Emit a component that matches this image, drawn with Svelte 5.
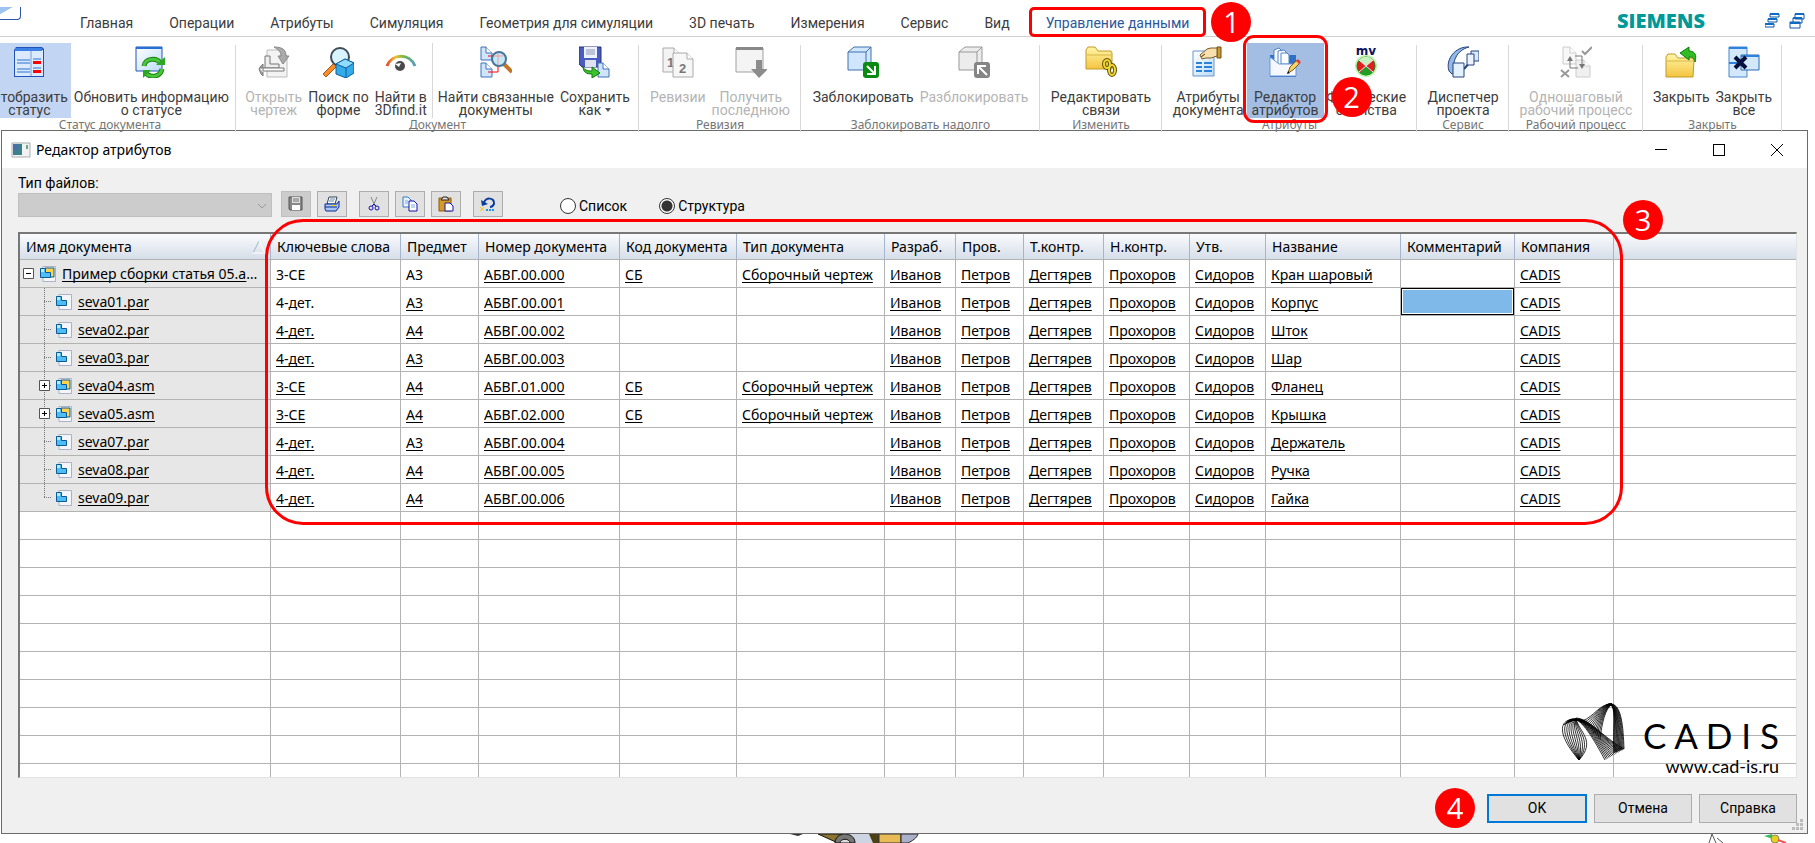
<script>
	const tabs = [
		'Главная',
		'Операции',
		'Атрибуты',
		'Симуляция',
		'Геометрия для симуляции',
		'3D печать',
		'Измерения',
		'Сервис',
		'Вид',
		'Управление данными'
	];
	let activeTab = $state('Управление данными');

	const groups = [
		{
			title: 'Статус документа',
			items: [
				{ icon: 'status', lines: ['Отобразить', 'статус'], on: true },
				{ icon: 'refresh', lines: ['Обновить информацию', 'о статусе'] }
			]
		},
		{
			title: 'Документ',
			items: [
				{ icon: 'draft', lines: ['Открыть', 'чертеж'], off: true },
				{ icon: 'shape', lines: ['Поиск по', 'форме'] },
				{ icon: 'eye', lines: ['Найти в', '3Dfind.it'] },
				{ icon: 'related', lines: ['Найти связанные', 'документы'], split: true },
				{ icon: 'saveas', lines: ['Сохранить', 'как'], menu: true }
			]
		},
		{
			title: 'Ревизия',
			items: [
				{ icon: 'revisions', lines: ['Ревизии'], off: true },
				{ icon: 'latest', lines: ['Получить', 'последнюю'], off: true }
			]
		},
		{
			title: 'Заблокировать надолго',
			items: [
				{ icon: 'lock', lines: ['Заблокировать'] },
				{ icon: 'unlock', lines: ['Разблокировать'], off: true }
			]
		},
		{ title: 'Изменить', items: [{ icon: 'links', lines: ['Редактировать', 'связи'] }] },
		{
			title: 'Атрибуты',
			items: [
				{ icon: 'props', lines: ['Атрибуты', 'документа'] },
				{ icon: 'editor', lines: ['Редактор', 'атрибутов'], mark: true },
				{ icon: 'physical', lines: ['Физические', 'свойства'] }
			]
		},
		{ title: 'Сервис', items: [{ icon: 'manager', lines: ['Диспетчер', 'проекта'] }] },
		{ title: 'Рабочий процесс', items: [{ icon: 'workflow', lines: ['Одношаговый', 'рабочий процесс'], off: true }] },
		{
			title: 'Закрыть',
			items: [
				{ icon: 'close', lines: ['Закрыть'] },
				{ icon: 'closeall', lines: ['Закрыть', 'все'] }
			]
		}
	];

	const columns = [
		{ name: 'Имя документа', width: 251 },
		{ name: 'Ключевые слова', width: 130 },
		{ name: 'Предмет', width: 78 },
		{ name: 'Номер документа', width: 141 },
		{ name: 'Код документа', width: 117 },
		{ name: 'Тип документа', width: 148 },
		{ name: 'Разраб.', width: 71 },
		{ name: 'Пров.', width: 68 },
		{ name: 'Т.контр.', width: 80 },
		{ name: 'Н.контр.', width: 86 },
		{ name: 'Утв.', width: 76 },
		{ name: 'Название', width: 135 },
		{ name: 'Комментарий', width: 114 },
		{ name: 'Компания', width: 99 }
	];

	const people = ['Иванов', 'Петров', 'Дегтярев', 'Прохоров', 'Сидоров'];
	const drawing = 'Сборочный чертеж';
	const rows = [
		['Пример сборки статья 05.asm', '3-СЕ', 'А3', 'АБВГ.00.000', 'СБ', drawing, 'Кран шаровый'],
		['seva01.par', '4-дет.', 'А3', 'АБВГ.00.001', '', '', 'Корпус'],
		['seva02.par', '4-дет.', 'А4', 'АБВГ.00.002', '', '', 'Шток'],
		['seva03.par', '4-дет.', 'А3', 'АБВГ.00.003', '', '', 'Шар'],
		['seva04.asm', '3-СЕ', 'А4', 'АБВГ.01.000', 'СБ', drawing, 'Фланец'],
		['seva05.asm', '3-СЕ', 'А4', 'АБВГ.02.000', 'СБ', drawing, 'Крышка'],
		['seva07.par', '4-дет.', 'А3', 'АБВГ.00.004', '', '', 'Держатель'],
		['seva08.par', '4-дет.', 'А4', 'АБВГ.00.005', '', '', 'Ручка'],
		['seva09.par', '4-дет.', 'А4', 'АБВГ.00.006', '', '', 'Гайка']
	].map((r) => ({ file: r[0], cells: [...r.slice(1, 6), ...people, r[6], '', 'CADIS'] }));
	const emptyRows = Array(10).fill(0);

	let view = $state('tree');
	let selected = $state('1-11');

	// values that are locked by the system are drawn without the underline
	const plain = ['0-0', '0-1', '1-0'];

	// the logo is a set of ribbons, each one a bundle of curves between two edges
	function bundle(a, b, n) {
		const out = [];
		for (let i = 0; i <= n; i++) {
			const p = a.map((v, k) => (v + ((b[k] - v) * i) / n).toFixed(1));
			out.push(`M${p[0]} ${p[1]}C${p.slice(2).join(' ')}`);
		}
		return out.join('');
	}
	const logo = [
		bundle([14, 16, -6, 16, -3, 34, 17, 57], [14, 16, 18, 30, 34, 38, 17, 57], 10),
		bundle([2, 22, 12, 8, 22, 18, 43, 57], [14, 15, 28, 16, 38, 32, 62, 46], 14),
		bundle([20, 18, 32, 14, 38, 0, 50, 1], [38, 36, 40, 20, 43, 6, 50, 1], 11),
		bundle([44, 2, 58, -4, 61, 16, 62, 46], [48, 1, 55, 4, 50, 28, 52, 50], 12)
	].join('');
</script>

{#snippet page(x, y, w, h, fill, stroke)}
	<path d="M{x} {y}h{w - 6}l6 6v{h - 6}h-{w}z" {fill} {stroke} />
	<path d="M{x + w - 6} {y}v6h6" fill="#fff" {stroke} />
{/snippet}

{#snippet icon(name)}
	<svg class="pic" viewBox="0 0 32 32" aria-hidden="true">
		<defs>
			<linearGradient id="blue" x1="0" y1="0" x2="1" y2="1"><stop offset="0" stop-color="#fff" /><stop offset="1" stop-color="#bcdcf8" /></linearGradient>
			<linearGradient id="gold" x1="0" y1="0" x2="0" y2="1"><stop offset="0" stop-color="#fff6a8" /><stop offset="1" stop-color="#f4c440" /></linearGradient>
			<linearGradient id="rainbow"><stop offset="0" stop-color="#e8482c" /><stop offset=".3" stop-color="#f4c02c" /><stop offset=".6" stop-color="#74b94a" /><stop offset="1" stop-color="#559cc4" /></linearGradient>
		</defs>
		{#if name === 'status'}
			<path d="M1 4l2-3h26l2 2v28H1z" fill="#2253b8" />
			<path d="M2 4h28v26H2z" fill="#dceaff" />
			<path d="M2 2h27v3H2z" fill="#3c82e6" />
			<path d="M18 5v25" stroke="#7d9cd4" />
			<path d="M4 14h13M4 17h13M4 23h13M4 26h13M20 13h8M20 22h8" stroke="#2772ce" />
			<path d="M20 15h8v3h-8zM20 24h8v3h-8z" fill="#f00" />
		{:else if name === 'refresh'}
			<path d="M1 1h26v24H1z" fill="url(#blue)" stroke="#2255b5" />
			<path d="M1 1h26v2H1z" fill="#2471d5" />
			<path d="M9 20c1-8 13-9 17-2M27 23c-2 9-13 9-17 3" fill="none" stroke="#17820e" stroke-width="5" />
			<path d="M9 20c1-8 13-9 17-2M27 23c-2 9-13 9-17 3" fill="none" stroke="#49c63c" stroke-width="3" />
			<path d="M21 19h9v-8zM16 24H8v8z" fill="#2ba722" />
		{:else if name === 'draft'}
			{@render page(9, 4, 20, 27, '#f3f3f3', '#bbb')}
			<path d="M7 10h5v8h9v4H7z" fill="#eee" stroke="#777" />
			<path d="M1 22h4v-4l-2 2-2 3 2 5 2 2v-4" fill="#aaa" stroke="#777" /><path d="M5 22h21v3H5z" fill="#fff" stroke="#777" />
			<path d="M16 1c10 0 12 4 12 9h3l-6 8-5-8h3c0-4-2-6-7-9z" fill="#aaa" stroke="#888" />
		{:else if name === 'shape'}
			<path d="M1 28L12 17l3 3L4 31z" fill="#f58d2b" stroke="#a85a18" />
			<circle cx="18" cy="11" r="9" fill="#d8f3ff" stroke="#3f4c55" stroke-width="2" />
			<path d="M14 18l9-5 9 4v10l-8 5-10-4z" fill="#35aae8" stroke="#0b5f9f" />
			<path d="M14 18l9-5 9 4-8 5z" fill="#8fdcff" stroke="#0b5f9f" /><path d="M24 22v10" stroke="#0b5f9f" />
		{:else if name === 'eye'}
			<path d="M2 20C7 7 25 7 30 20" fill="none" stroke="url(#rainbow)" stroke-width="3" />
			<circle cx="15" cy="20" r="5" fill="#4a4a4a" /><path d="M10 18l6-1-2 4z" fill="#fff" />
		{:else if name === 'related'}
			{@render page(1, 1, 11, 13, '#cfe5fb', '#3f72b8')}
			{@render page(1, 17, 11, 14, '#cfe5fb', '#3f72b8')}
			<path d="M8 10h4M8 26h10v-8" fill="none" stroke="#f00" />
			<path d="M24 18l8 8" stroke="#c37428" stroke-width="4" />
			<circle cx="19" cy="13" r="7" fill="#c3e8f8" stroke="#48759a" stroke-width="2" /><path d="M18 7v12M14 10h9" stroke="#f29a9a" />
		{:else if name === 'saveas'}
			<path d="M0 1h22v20H3l-3-3z" fill="#4a5cc0" stroke="#29327e" />
			<path d="M5 1h13v11H5z" fill="#eef2ff" /><path d="M7 4h9M7 6h9M7 8h9" stroke="#8a96b6" /><path d="M6 14h11v7H6z" fill="#dfe3ee" />
			{@render page(19, 17, 11, 14, '#cfe5fb', '#3f72b8')}
			<path d="M4 20c1 4 4 5 9 5v-4l8 6-8 5v-4c-6 0-9-2-9-8z" fill="#3bc32b" stroke="#117a0d" />
		{:else if name === 'revisions'}
			{@render page(1, 2, 17, 24, '#f3f3f3', '#aaa')}
			<text x="5" y="21" class="num">1</text>
			{@render page(11, 7, 20, 24, '#f7f7f7', '#aaa')}
			<text x="17" y="27" class="num">2</text>
		{:else if name === 'latest'}
			<path d="M1 2h27v24H1z" fill="#f4f4f4" stroke="#a0a0a0" /><path d="M1 1h27v3H1z" fill="#888" />
			<path d="M21 14h6v9h6l-9 9-8-9h5z" fill="#8c8c8c" />
		{:else if name === 'lock' || name === 'unlock'}
			{@const gray = name === 'unlock'}
			<path d="M1 6l6-5h17v18l-5 5H1z" fill={gray ? '#ececec' : '#cfe6fc'} stroke={gray ? '#999' : '#4171a8'} />
			<path d="M1 6h18v18M19 6l5-5" fill="none" stroke={gray ? '#999' : '#4171a8'} />
			<rect x="16" y="16" width="16" height="16" rx="3" fill={gray ? '#858585' : '#0a8a12'} />
			{#if gray}
				<path d="M29 29L20 20M20 28v-8h8" fill="none" stroke="#fff" stroke-width="2" />
			{:else}
				<path d="M20 20l8 8M28 20v8h-8" fill="none" stroke="#fff" stroke-width="2" />
			{/if}
		{:else if name === 'links'}
			<path d="M1 4l2-3h7l3 4h13l1 2v16H1z" fill="url(#gold)" stroke="#c39a26" />
			<path d="M2 9h24" stroke="#d8b544" />
			<g fill="none" stroke="#66560a" stroke-width="4"><ellipse cx="22" cy="18" rx="3" ry="4" /><ellipse cx="27" cy="24" rx="3" ry="5" /></g>
			<g fill="none" stroke="#f0d830" stroke-width="2"><ellipse cx="22" cy="18" rx="3" ry="4" /><ellipse cx="27" cy="24" rx="3" ry="5" /></g>
		{:else if name === 'close'}
			<path d="M1 11l2-3h7l3 4h14l2 2-1 17H1z" fill="url(#gold)" stroke="#c39a26" />
			<path d="M2 15h26" stroke="#d8b544" />
			<path d="M15 7l9-6v4c6 0 8 4 6 11-1-4-2-5-6-5v3z" fill="#32bc23" stroke="#117a0d" />
		{:else if name === 'props'}
			<path d="M1 5h21v25H1z" fill="url(#blue)" stroke="#6795cc" />
			<path d="M4 17h6M12 17h8M4 21h6M12 21h8M4 25h6M12 25h8" stroke="#2a83d8" stroke-width="2" />
			<path d="M25 1h4v11h-4z" fill="#c89a3a" stroke="#6e4f14" />
			<path d="M8 9l7-6 4-1h6v8l-6 2H14l-4 1-1-2 4-3-4 3z" fill="#f7dfae" stroke="#7a5a26" />
		{:else if name === 'editor'}
			<path d="M1 9h26v22H1z" fill="#2f6fc4" />
			<path d="M5 4l5-2 2 2v15H5z" fill="#fff" stroke="#4b82c8" /><path d="M9 5l6-1 2 2v13H9z" fill="#fff" stroke="#4b82c8" /><path d="M12 7h6l2 2v9h-8z" fill="#fff" stroke="#4b82c8" />
			<path d="M1 11l9 7h17v12H1z" fill="#f5f9ff" stroke="#6a97d5" />
			<path d="M19 27l2-6 7-7 3 3-7 7z" fill="#f6d169" stroke="#7b5b1c" /><path d="M27 15l2-2 3 3-2 2z" fill="#e04040" /><path d="M18 28l1-3 2 2z" fill="#111" />
		{:else if name === 'physical'}
			<text x="16" y="9" class="mv">mv</text>
			<circle cx="16" cy="20" r="11" fill="#b8f5a4" /><circle cx="16" cy="20" r="9" fill="#e01f1f" stroke="#2f6f22" />
			<path d="M16 20l-7-6a9 9 0 0 1 14 0z" fill="#c9f0c0" /><path d="M16 20l-6 7a9 9 0 0 0 12 0z" fill="#1f9d26" /><path d="M9 14l14 12M23 14L9 26" stroke="#eee" />
		{:else if name === 'manager'}
			<path d="M22 1C9 0-2 13 2 25l3 3 3-1C4 16 10 4 22 1z" fill="#92b8e8" stroke="#26437c" />
			<path d="M17 23l8-9" stroke="#26437c" stroke-width="2" />
			<path d="M24 5h8v10h-8z" fill="#d9eafc" stroke="#26437c" /><path d="M20 8h7v11h-7z" fill="#eaf4ff" stroke="#26437c" /><path d="M6 17h11v14H6z" fill="#e4f1ff" stroke="#26437c" />
		{:else if name === 'workflow'}
			{@render page(3, 1, 13, 17, '#f7f7f7', '#ccc')}
			{@render page(16, 14, 14, 17, '#f0f0f0', '#ccc')}
			<path d="M10 14v8h8M15 10h7v8" fill="none" stroke="#777" /><path d="M7 15l3-5 3 5zM19 18h6l-3 5z" fill="#777" />
			<path d="M22 5l3 3 7-7M1 24l8 7M9 24l-8 7" fill="none" stroke="#999" stroke-width="2" />
		{:else if name === 'closeall'}
			<path d="M1 1h18v30H1z" fill="#d3e9fb" stroke="#4687cc" /><path d="M13 9h18v15H13z" fill="#d3e9fb" stroke="#2a68b0" />
			<path d="M1 1h18v2H1zM1 16h12v2H1zM13 9h18v2H13z" fill="#2b83da" />
			<path d="M7 11l11 11M18 11L7 22" stroke="#07103c" stroke-width="4" />
		{/if}
	</svg>
{/snippet}

{#snippet tool(name)}
	<svg width="16" height="16" viewBox="0 0 16 16" aria-hidden="true">
		{#if name === 'save'}
			<path d="M1 1h13v13H2l-1-1z" fill="#888" stroke="#555" /><path d="M4 1h8v6H4z" fill="#ddd" /><path d="M5 3h6M5 5h6" stroke="#777" /><path d="M4 9h8v5H4z" fill="#fff" />
		{:else if name === 'print'}
			<path d="M3 8l2-7h8l-2 7z" fill="#fff" stroke="#345" /><path d="M6 3h5M5 5h5" stroke="#68a" />
			<path d="M1 8h12l2-3v6l-3 4H2l-1-2z" fill="#a9c6f5" stroke="#0a2a90" /><path d="M1 11h12" stroke="#0a2a90" /><path d="M8 9h3v1H8z" fill="#fd0" />
		{:else if name === 'cut'}
			<path d="M5 1l4 9M11 1L7 10" stroke="#888" /><circle cx="5" cy="12" r="2" fill="none" stroke="#1414a8" /><circle cx="11" cy="12" r="2" fill="none" stroke="#1414a8" /><path d="M6 10l2-2 2 2" fill="none" stroke="#1414a8" />
		{:else if name === 'copy'}
			<path d="M1 1h5l3 3v7H1z" fill="#e8f2ff" stroke="#3a78c4" /><path d="M7 5h5l3 3v7H7z" fill="#fff" stroke="#1414a8" /><path d="M3 5h3M3 7h3M9 9h4M9 11h4" stroke="#7aabe8" />
		{:else if name === 'paste'}
			<path d="M1 2h12v13H1z" fill="#d69a28" stroke="#8b5a10" /><path d="M3 4l2-3h4l2 3z" fill="#ddd" stroke="#222" /><path d="M7 7h5l3 3v5H7z" fill="#fff" stroke="#1414a8" />
		{:else}
			<path d="M4 7c1-6 11-6 10 1-1 2-2 3-4 3" fill="none" stroke="#0b3c9a" stroke-width="2" /><path d="M1 4l1 6 6-2z" fill="#0b3c9a" />
			<path d="M0 11l4 4M4 11l-4 4" stroke="#ec3" /><path d="M6 14h9" stroke="#1c93ee" stroke-width="2" stroke-dasharray="2 1" />
		{/if}
	</svg>
{/snippet}

<div class="app">
	<header class="tabs">
		<div class="corner"></div>
		<nav>
			{#each tabs as tab}
				<button class="tab" class:active={tab === activeTab} onclick={() => (activeTab = tab)}>
					{tab}
					{#if tab === 'Управление данными'}<span class="badge one">1</span>{/if}
				</button>
			{/each}
		</nav>
		<div class="brand">
			<span class="siemens">SIEMENS</span>
			<svg width="40" height="16" viewBox="0 0 40 16" aria-hidden="true">
				<path d="M5 1h9v3H5zM3 6h9v3H3zM0 11h9v3H0z" fill="#fff" stroke="#0e57a8" /><path d="M5 1h9M3 6h9M0 11h9" stroke="#0e6cc4" stroke-width="2" />
				<path d="M30 1h9v5h-9zM28 5h9v5h-9zM25 9h10v6H25z" fill="#fff" stroke="#0e57a8" /><path d="M30 1h9M28 5h9M25 10h10" stroke="#0e6cc4" stroke-width="2" />
			</svg>
		</div>
	</header>

	<div class="ribbon">
		{#each groups as group}
			<section class="group">
				<div class="items">
					{#each group.items as item}
						{#if item.split}<i class="split"></i>{/if}
						<button class="cmd" class:on={item.on} class:mark={item.mark} disabled={item.off}>
							{@render icon(item.icon)}
							<span class="caption">
								{#each item.lines as line, i}
									<span>{line}{#if item.menu && i === 1}<i class="arrow"></i>{/if}</span>
								{/each}
							</span>
							{#if item.mark}<span class="badge two">2</span>{/if}
						</button>
					{/each}
				</div>
				<div class="group-title">{group.title}</div>
			</section>
		{/each}
	</div>

	<main class="dialog">
		<div class="titlebar">
			<svg width="20" height="16" viewBox="0 0 20 16" aria-hidden="true">
				<path d="M1 1h18v14H1z" fill="#f2f2f2" stroke="#a9adb0" /><path d="M2 2h9v11H2z" fill="#3d7f8c" /><path d="M2 2h5v6H2z" fill="#4b6ea8" /><path d="M15 3h2v4h-2z" fill="#67a58c" />
			</svg>
			<h1>Редактор атрибутов</h1>
			<button aria-label="Свернуть"><svg width="12" height="12"><path d="M0 5h12v1H0z" /></svg></button>
			<button aria-label="Развернуть"><svg width="12" height="12"><path d="M0 0h12v12H0zM1 1v10h10V1z" fill-rule="evenodd" /></svg></button>
			<button aria-label="Закрыть окно"><svg width="12" height="12"><path d="M0 0l12 12M12 0L0 12" stroke="#000" /></svg></button>
		</div>

		<div class="body">
			<div class="toolbar">
				<div class="filter">
					<label for="types">Тип файлов:</label>
					<div class="combo">
						<select id="types" disabled></select>
						<svg class="chevron" width="10" height="6" viewBox="0 0 10 6" aria-hidden="true"><path d="M1 1l4 4 4-4" fill="none" stroke="#999" /></svg>
					</div>
				</div>
				<div class="tools">
					<button class="tool" aria-label="Сохранить" disabled>{@render tool('save')}</button>
					<button class="tool" aria-label="Печать">{@render tool('print')}</button>
				</div>
				<div class="tools">
					<button class="tool" aria-label="Вырезать">{@render tool('cut')}</button>
					<button class="tool" aria-label="Копировать">{@render tool('copy')}</button>
					<button class="tool" aria-label="Вставить">{@render tool('paste')}</button>
				</div>
				<div class="tools">
					<button class="tool" aria-label="Отменить">{@render tool('undo')}</button>
				</div>
				<div class="views">
					<label><input type="radio" name="view" value="list" bind:group={view} />Список</label>
					<label><input type="radio" name="view" value="tree" bind:group={view} />Структура</label>
				</div>
			</div>

			<div class="grid">
				<div class="scroll">
					<table>
						<colgroup>
							{#each columns as col}
								<col style="width: {col.width}px" />
							{/each}
							<col />
						</colgroup>
						<thead>
							<tr>
								{#each columns as col, i}
									<th>
										{col.name}
										{#if i === 0}<svg class="sort" width="14" height="13" viewBox="0 0 14 13" aria-hidden="true"><path d="M7 0L1 12" stroke="#9fb4d0" /><path d="M7 0l6 12H0" fill="none" stroke="#fff" /></svg>{/if}
									</th>
								{/each}
								<th></th>
							</tr>
						</thead>
						<tbody>
							{#each rows as row, r}
								<tr>
									<td class="name">
										<div class="node">
											<svg width={r === 0 ? 20 : 36} height="27" aria-hidden="true">
												{#if r > 0}
													<path d="M24.5 0V{r === rows.length - 1 ? 14 : 27}M24 13.5h8" stroke="#777" stroke-dasharray="1 1" />
												{/if}
												{#if row.file.endsWith('asm')}
													<g transform="translate({r === 0 ? 3 : 19} 8)">
														<path d="M.5 .5h10v10H.5z" fill="#fff" stroke="#555" />
														<path d={r === 0 ? 'M3 5.5h5' : 'M3 5.5h5M5.5 3v5'} stroke="#000" />
													</g>
												{/if}
											</svg>
											<svg width="16" height="16" viewBox="0 0 16 16" aria-hidden="true">
												<path d="M3 .5h12.5v15H3z" fill="#f4f6fb" stroke="#aab2c4" />
												{#if row.file.endsWith('asm')}
													<path d="M5 2h9v9H5z" fill="#ffd34d" stroke="#0c5a94" />
												{/if}
												<path d="M.5 2.5h5v4h5v5H.5z" fill="#4fbcf5" stroke="#0c5a94" />
												<path d="M1 3h3v3H1z" fill="#b9e8ff" />
											</svg>
											<span class="file">{row.file}</span>
										</div>
									</td>
									{#each row.cells as cell, c}
										<td class:selected={selected === `${r}-${c}`} class:plain={plain.includes(`${r}-${c}`)} onclick={() => (selected = `${r}-${c}`)}>{cell}</td>
									{/each}
									<td></td>
								</tr>
							{/each}
							{#each emptyRows as _}
								<tr>
									{#each columns as _}<td></td>{/each}
									<td></td>
								</tr>
							{/each}
						</tbody>
					</table>
				</div>
				<div class="outline"><span class="badge three">3</span></div>
				<div class="cadis">
					<svg width="64" height="58" viewBox="0 0 64 58" aria-hidden="true"><path d={logo} fill="none" stroke="#000" stroke-width=".8" /></svg>
					<div class="words">
						<span class="word">C A D I S</span>
						<span class="site">www.cad-is.ru</span>
					</div>
				</div>
			</div>

			<footer>
				<span class="badge">4</span>
				<button class="ok">OK</button>
				<button>Отмена</button>
				<button>Справка</button>
				<svg class="grip" width="12" height="12" aria-hidden="true"><path d="M8 0h3v3H8zM4 4h3v3H4zM8 4h3v3H8zM0 8h3v3H0zM4 8h3v3H4zM8 8h3v3H8z" fill="#bbb" /></svg>
			</footer>
		</div>
	</main>

	<!-- edge of the 3D model that shows under the dialog -->
	<div class="scene">
		<svg width="136" height="9" viewBox="0 0 136 9" aria-hidden="true">
			<path d="M0 0l8 2 5-2z" fill="#333" /><path d="M28 0h24l-4 9z" fill="#8b7530" stroke="#111" />
			<path d="M55 0h28v9H65z" fill="#cdd5e2" /><path d="M45 9c0-12 20-12 20 0z" fill="#777" stroke="#111" /><path d="M50 9c0-5 10-5 10 0z" fill="#ddd" stroke="#111" /><path d="M79 0h10v9h-6z" fill="#4d4114" />
			<path d="M89 0h22v9H89z" fill="#e9bb55" stroke="#333" /><path d="M111 0h17c-1 4-6 7-10 9h-7z" fill="#aab0c8" stroke="#222" />
		</svg>
		<svg width="90" height="9" viewBox="0 0 90 9" aria-hidden="true">
			<path d="M4 0L1 9M4 0l4 9M9 4l6 5" stroke="#555" fill="none" /><path d="M64 0l-8 2 9 3z" fill="#3b5" /><circle cx="67" cy="5" r="4" fill="#e8d020" stroke="#886" /><path d="M70 6l8 3" stroke="#e55" stroke-width="2" />
		</svg>
	</div>
</div>

<style>
	:global(body) {
		background: #fff;
	}
	.app {
		display: flex;
		flex-direction: column;
		height: 100vh;
		overflow: hidden;
		font-family: Roboto, sans-serif;
		font-size: 14px;
		color: #3c3c3c;
	}
	button {
		font: inherit;
		color: inherit;
		margin: 0;
		padding: 0;
		border: 0;
		background: none;
	}
	.badge {
		display: flex;
		align-items: center;
		justify-content: center;
		width: 40px;
		height: 40px;
		border-radius: 50%;
		background: #f00;
		color: #fff;
		font: 29px/40px "Open Sans", sans-serif;
		z-index: 5;
	}

	.tabs {
		display: flex;
		height: 29px;
		padding-top: 7px;
		border-bottom: 1px solid #d0d0d0;
	}
	.corner {
		box-sizing: border-box;
		width: 21px;
		height: 13px;
		border: solid #2c56a8;
		border-width: 0 1px 1px 0;
		border-radius: 0 0 4px 0;
		background: linear-gradient(150deg, #9cc4ee 30%, #fff 32%);
	}
	nav {
		display: flex;
		flex: 1;
		padding-left: 41px;
	}
	.tab {
		position: relative;
		padding: 2px 18px 0;
		white-space: nowrap;
	}
	.tab.active {
		color: #2b579a;
	}
	.tab.active::after {
		content: '';
		position: absolute;
		inset: 0 1px -1px;
		border: 3px solid #f00;
		border-radius: 5px;
	}
	.one {
		position: absolute;
		left: calc(100% + 4px);
		top: -5px;
	}
	.brand {
		display: flex;
		align-items: center;
		gap: 60px;
		padding-right: 10px;
		margin-top: -2px;
	}
	.siemens {
		font: 800 20px "Open Sans", sans-serif;
		color: #099;
	}

	.ribbon {
		display: grid;
		grid-template-columns: 252px 403px 162px 239px 122px 255px 92px 134px 139px;
		height: 93px;
		margin-left: -16px;
	}
	.group {
		display: flex;
		flex-direction: column;
		position: relative;
		padding-top: 6px;
	}
	.group::after {
		content: '';
		position: absolute;
		right: 0;
		top: 8px;
		bottom: 0;
		border-right: 1px solid #d8d8d8;
	}
	.items {
		display: flex;
		justify-content: center;
		height: 75px;
	}
	.split {
		border-right: 1px solid #d8d8d8;
		margin: 0 2px;
	}
	.cmd {
		display: flex;
		flex-direction: column;
		align-items: center;
		position: relative;
		padding: 3px 3px 0;
		line-height: 13px;
		white-space: nowrap;
	}
	.cmd:disabled {
		color: #b4b4b4;
	}
	.cmd.on {
		background: #c2d5f2;
	}
	.cmd.mark {
		background: #a3bde3;
		padding: 3px 5px 0;
	}
	.cmd.mark::after {
		content: '';
		position: absolute;
		inset: -8px -4px -5px;
		border: 3px solid #f00;
		border-radius: 11px;
	}
	.two {
		position: absolute;
		left: calc(100% + 8px);
		top: 34px;
	}
	.pic {
		width: 32px;
		height: 32px;
		margin-bottom: 13px;
	}
	.num {
		font: bold 13px "Liberation Sans", sans-serif;
		fill: #777;
	}
	.mv {
		font: bold 12px "DejaVu Sans", sans-serif;
		fill: #0a1460;
		text-anchor: middle;
	}
	.caption {
		display: flex;
		flex-direction: column;
		align-items: center;
	}
	.arrow {
		display: inline-block;
		margin: 0 0 3px 4px;
		border: solid transparent;
		border-width: 4px 3px 0;
		border-top-color: #555;
	}
	.group-title {
		text-align: center;
		font: 12px/14px "Noto Sans", sans-serif;
		color: #757575;
	}

	.dialog {
		display: flex;
		flex: 1;
		flex-direction: column;
		min-height: 0;
		margin: 0 7px 0 1px;
		border: 1px solid #6b6b6b;
		background: #f0f0f0;
		color: #000;
	}
	.titlebar {
		display: flex;
		align-items: center;
		height: 37px;
		padding: 0 1px 0 9px;
		background: #fff;
	}
	h1 {
		flex: 1;
		margin: 0 0 0 5px;
		font: 14px "Noto Sans", sans-serif;
	}
	.titlebar button {
		display: flex;
		align-items: center;
		justify-content: center;
		width: 58px;
		height: 36px;
	}
	.body {
		display: flex;
		flex: 1;
		flex-direction: column;
		min-height: 0;
		padding: 5px 10px 5px 16px;
	}
	.toolbar {
		display: flex;
		align-items: flex-end;
		gap: 12px;
		height: 44px;
	}
	.filter {
		margin-right: -3px;
	}
	.filter label {
		display: block;
		line-height: 20px;
	}
	.combo {
		position: relative;
	}
	select {
		display: block;
		width: 254px;
		height: 24px;
		appearance: none;
		border: 1px solid #bfbfbf;
		border-radius: 0;
		background: #ccc;
		opacity: 1;
	}
	.chevron {
		position: absolute;
		right: 5px;
		top: 10px;
	}
	.tools {
		display: flex;
		gap: 6px;
	}
	.tool {
		display: flex;
		align-items: center;
		justify-content: center;
		box-sizing: border-box;
		width: 30px;
		height: 26px;
		border: 1px solid #adadad;
		background: #e1e1e1;
	}
	.tool:disabled {
		background: #ccc;
		border-color: #bfbfbf;
	}
	.views {
		display: flex;
		gap: 32px;
		margin-left: 45px;
		line-height: 22px;
	}
	.views label {
		display: flex;
		align-items: center;
		gap: 3px;
	}
	.views input {
		width: 16px;
		height: 16px;
		margin: 0;
		appearance: none;
		border: 1px solid #333;
		border-radius: 50%;
		background: #fff;
	}
	.views input:checked {
		background: radial-gradient(#333 5px, #fff 6px);
	}

	.grid {
		position: relative;
		flex: 1;
		min-height: 0;
		margin-top: 15px;
	}
	.scroll {
		box-sizing: border-box;
		height: 100%;
		overflow: hidden;
		border: solid #777;
		border-width: 2px 1px 1px 2px;
		border-right-color: #e3e3e3;
		border-bottom-color: #e3e3e3;
		background: #fff;
	}
	table {
		width: 100%;
		table-layout: fixed;
		border-collapse: separate;
		border-spacing: 0;
		font: 14px "Noto Sans", sans-serif;
	}
	th,
	td {
		box-sizing: border-box;
		overflow: hidden;
		padding: 0 0 0 5px;
		border: solid #b3b3b3;
		border-width: 0 1px 1px 0;
		text-align: left;
		white-space: nowrap;
		font-weight: normal;
	}
	th:last-child,
	td:last-child {
		border-right: 0;
	}
	th {
		position: relative;
		height: 26px;
		padding-left: 6px;
		border-right-color: #a3b6cd;
		background: linear-gradient(#fafbfd, #d6dee9);
	}
	.sort {
		position: absolute;
		right: 4px;
		top: 7px;
	}
	td {
		height: 28px;
		padding-top: 1px;
		text-decoration: underline;
		text-decoration-skip-ink: none;
		text-underline-offset: 2px;
	}
	td.plain {
		text-decoration: none;
	}
	td.name {
		padding: 0;
		background: #e7e7e7;
	}
	td.selected {
		background: #7eb9e9;
		box-shadow: inset 0 0 0 1px #000, inset 0 0 0 2px #fff;
	}
	.node {
		display: flex;
		align-items: center;
		height: 27px;
	}
	.node svg {
		flex: none;
	}
	.file {
		margin: 0 8px 0 6px;
		overflow: hidden;
		text-overflow: ellipsis;
		text-decoration: underline;
		text-decoration-skip-ink: none;
		text-underline-offset: 2px;
	}
	.outline {
		position: absolute;
		left: 247px;
		top: -13px;
		box-sizing: border-box;
		width: 1358px;
		height: 306px;
		border: 3px solid #f00;
		border-radius: 38px;
		pointer-events: none;
	}
	.three {
		position: absolute;
		right: -43px;
		top: -22px;
	}
	.cadis {
		position: absolute;
		right: 18px;
		bottom: 0;
		display: flex;
		gap: 17px;
		height: 75px;
		color: #000;
	}
	.words {
		display: flex;
		flex-direction: column;
		align-items: flex-end;
		padding-top: 13px;
		font-family: Lato, sans-serif;
	}
	.word {
		font-size: 35px;
		line-height: 38px;
	}
	.site {
		font-size: 18px;
		line-height: 24px;
	}

	footer {
		display: flex;
		align-items: center;
		gap: 7px;
		position: relative;
		padding-top: 10px;
	}
	footer .badge {
		margin-left: auto;
		margin-right: 5px;
	}
	footer button {
		box-sizing: border-box;
		width: 98px;
		height: 29px;
		border: 1px solid #adadad;
		background: #e1e1e1;
	}
	footer .ok {
		width: 100px;
		border: 2px solid #0078d7;
	}
	.grip {
		position: absolute;
		right: -7px;
		bottom: -3px;
	}
	.scene {
		display: flex;
		justify-content: space-between;
		height: 9px;
		padding: 0 17px 0 790px;
	}
</style>
